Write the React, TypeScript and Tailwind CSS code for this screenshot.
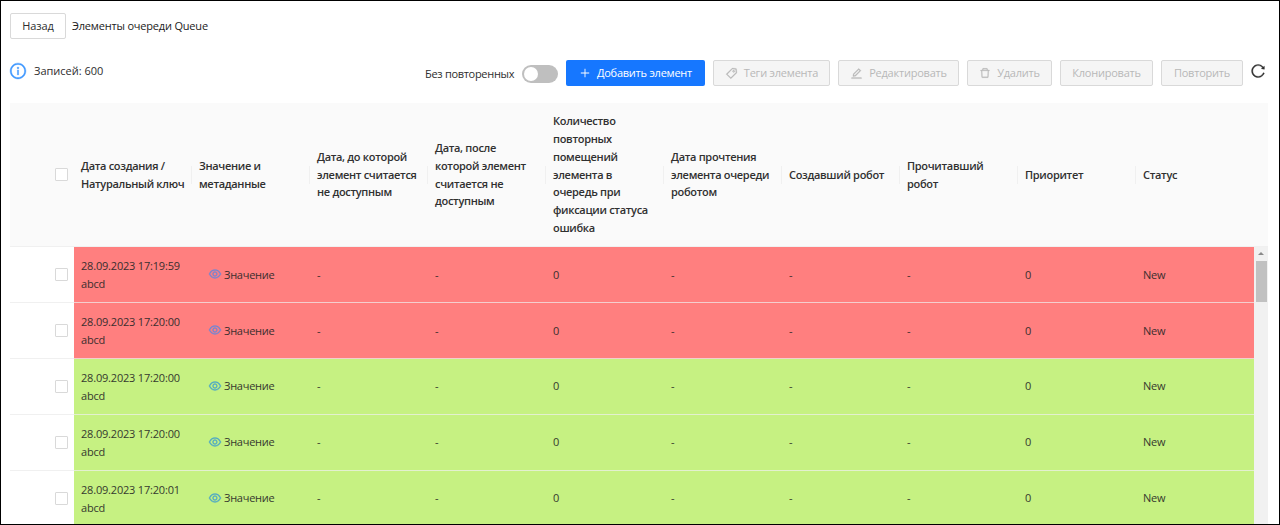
import React from 'react';
import {
  AiOutlineDelete,
  AiOutlineEdit,
  AiOutlineEye,
  AiOutlineInfoCircle,
  AiOutlinePlus,
  AiOutlineReload,
  AiOutlineTag,
} from 'react-icons/ai';

const headers: string[][] = [
  ['Дата создания /', 'Натуральный ключ'],
  ['Значение и', 'метаданные'],
  ['Дата, до которой', 'элемент считается', 'не доступным'],
  ['Дата, после', 'которой элемент', 'считается не', 'доступным'],
  ['Количество', 'повторных', 'помещений', 'элемента в', 'очередь при', 'фиксации статуса', 'ошибка'],
  ['Дата прочтения', 'элемента очереди', 'роботом'],
  ['Создавший робот'],
  ['Прочитавший', 'робот'],
  ['Приоритет'],
  ['Статус'],
];

const rows = [
  { date: '28.09.2023 17:19:59', color: 'bg-[#ff7f7f]', eye: 'text-[#6f86d6]' },
  { date: '28.09.2023 17:20:00', color: 'bg-[#ff7f7f]', eye: 'text-[#6f86d6]' },
  { date: '28.09.2023 17:20:00', color: 'bg-[#c6f182]', eye: 'text-[#4aa5c8]' },
  { date: '28.09.2023 17:20:00', color: 'bg-[#c6f182]', eye: 'text-[#4aa5c8]' },
  { date: '28.09.2023 17:20:01', color: 'bg-[#c6f182]', eye: 'text-[#4aa5c8]' },
];

const values = ['-', '-', '0', '-', '-', '-', '0', 'New'];

function Checkbox() {
  return <span className="block size-[13px] rounded-[1px] border border-[#d9d9d9] bg-white" />;
}

function ToolButton({ width, icon, children }: { width: string; icon?: React.ReactNode; children: React.ReactNode }) {
  return (
    <button
      className={`${width} flex h-[26px] shrink-0 items-center justify-center gap-[6px] rounded-[2px] border border-[#d9d9d9] bg-[#f5f5f5] tracking-[-0.22px] text-[#b8b8b8]`}
    >
      {icon}
      <span>{children}</span>
    </button>
  );
}

export default function App() {
  return (
    <div className="flex h-[525px] w-[1280px] flex-col overflow-hidden border border-black bg-white pl-[9px] font-['Open_Sans','Noto_Sans',sans-serif] text-[11px] tracking-[-0.19px] whitespace-nowrap text-[#2e2e2e]">
      <div className="mt-3 flex h-[26px] shrink-0 items-center gap-[6px]">
        <button className="h-[26px] w-[56px] rounded-[2px] border border-[#d9d9d9] tracking-[-0.1px]">Назад</button>
        <span className="text-[#222222]">Элементы очереди Queue</span>
      </div>

      <div className="mt-[21px] flex h-[26px] shrink-0 items-center">
        <AiOutlineInfoCircle className="mt-[-4px] ml-[-1px] size-[18px] stroke-[24px] text-[#3d97ff]" />
        <span className="mt-[-3px] ml-[7px] w-[391px] tracking-normal">Записей: 600</span>
        <span className="mt-[2px] w-[97px] tracking-[-0.3px]">Без повторенных</span>
        <span className="mt-[2px] flex h-[18px] w-[36px] items-center rounded-full bg-[#bfbfbf] pl-[2px]">
          <span className="size-[14px] rounded-full bg-white" />
        </span>
        <button className="ml-[8px] flex h-[26px] w-[139px] items-center justify-center gap-[6px] rounded-[2px] bg-[#1677ff] tracking-[-0.24px] text-white">
          <AiOutlinePlus className="size-3" />
          <span>Добавить элемент</span>
        </button>
        <div className="ml-2 flex gap-2">
          <ToolButton width="w-[117px]" icon={<AiOutlineTag className="size-[13px] stroke-[20px]" />}>Теги элемента</ToolButton>
          <ToolButton width="w-[121px]" icon={<AiOutlineEdit className="size-[13px] stroke-[20px]" />}>Редактировать</ToolButton>
          <ToolButton width="w-[85px]" icon={<AiOutlineDelete className="size-3 stroke-[20px]" />}>Удалить</ToolButton>
          <ToolButton width="w-[93px]">Клонировать</ToolButton>
          <ToolButton width="w-[82px]">Повторить</ToolButton>
        </div>
        <AiOutlineReload className="mt-[-4px] ml-[7px] size-[16px] stroke-[24px]" />
      </div>

      <div className="mt-[17px] flex h-[144px] w-[1258px] shrink-0 border-b border-[#f0f0f0] bg-[#fafafa]">
        <div className="flex w-[64px] items-center pl-[45px]">
          <Checkbox />
        </div>
        {headers.map((lines, i) => (
          <div key={i} className="flex w-[118px] items-center justify-between pl-[7px]">
            <div className="leading-[17.8px] font-semibold tracking-[-0.31px] text-[#303030]">
              {lines.map((line) => (
                <div key={line}>{line}</div>
              ))}
            </div>
            {i < headers.length - 1 && <span className="h-[18px] w-px bg-[#f0f0f0]" />}
          </div>
        ))}
      </div>

      <div className="flex min-h-0 w-[1258px] flex-1 overflow-hidden">
        <div className="w-[1244px] shrink-0">
          {rows.map((row, i) => (
            <div key={i} className="flex h-[55.9px] text-[#262626]">
              <div className="flex w-[64px] shrink-0 items-center border-b border-[#f0f0f0] pl-[45px]">
                <Checkbox />
              </div>
              <div className={`${row.color} flex w-[1180px] items-center border-b border-[#f0f0f0]/70`}>
                <div className="w-[118px] pt-px pl-[7px] leading-[18px] opacity-90">
                  <div>{row.date}</div>
                  <div>abcd</div>
                </div>
                <div className="flex w-[118px] items-center gap-[2px] pl-[16px]">
                  <AiOutlineEye className={`${row.eye} mt-[-1px] size-[14px] stroke-[24px]`} />
                  <span className="pt-px tracking-[-0.25px] opacity-90">Значение</span>
                </div>
                {values.map((value, j) => (
                  <div key={j} className="w-[118px] pt-px pl-[7px] opacity-90">{value}</div>
                ))}
              </div>
            </div>
          ))}
        </div>
        <div className="flex w-[14px] flex-col items-center bg-[#f1f1f1] pt-[5px]">
          <svg viewBox="0 0 6 3" className="h-[3px] w-[6px]" fill="#8a8a8a">
            <path d="M3 0 6 3H0z" />
          </svg>
          <div className="mt-[6px] ml-px h-[41px] w-[11px] bg-[#c1c1c1]" />
        </div>
      </div>
    </div>
  );
}
